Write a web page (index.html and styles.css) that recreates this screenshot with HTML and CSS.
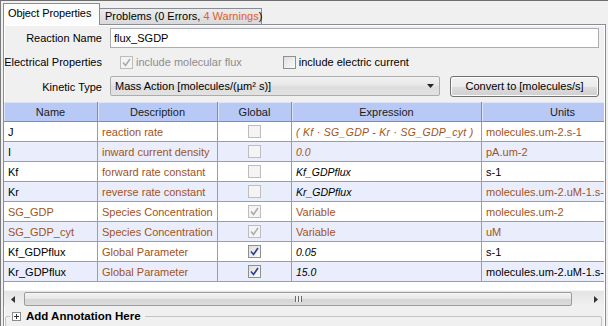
FILE: index.html
```html
<!DOCTYPE html>
<html lang="en">
<head>
  <meta charset="UTF-8" />
  <title>Object Properties</title>
  <link rel="stylesheet" href="styles.css">
</head>
<body>
  <div class="tabs">
    <div class="tab active">Object Properties</div>
    <div class="tab">Problems (0 Errors, <span class="warn">4 Warnings</span>)</div>
  </div>

  <div class="pane">
    <div class="form">
      <label>Reaction Name</label>
      <div class="field">flux_SGDP</div>

      <label>Electrical Properties</label>
      <div class="checks">
        <span class="opt disabled">
          <span class="cb off"><svg width="11" height="11" viewBox="0 0 11 11"><path d="M2 5.5 4.5 8.5 9 2" fill="none" stroke="#a9a9a9" stroke-width="1.5"/></svg></span>
          include molecular flux
        </span>
        <span class="opt">
          <span class="cb"></span>
          include electric current
        </span>
      </div>

      <label>Kinetic Type</label>
      <div class="kinetic">
        <div class="combo">
          <span>Mass Action [molecules/(µm² s)]</span>
          <svg width="7" height="4" viewBox="0 0 7 4"><path d="M0 0h7L3.5 4z" fill="#222"/></svg>
        </div>
        <div class="button">Convert to [molecules/s]</div>
      </div>
    </div>

    <div class="grid-wrap">
      <div class="viewport">
        <table class="params">
          <colgroup>
            <col class="c-name"><col class="c-desc"><col class="c-glob"><col class="c-expr"><col class="c-unit">
          </colgroup>
          <thead>
            <tr><th>Name</th><th>Description</th><th>Global</th><th>Expression</th><th>Units</th></tr>
          </thead>
          <tbody>
            <tr>
              <td>J</td><td class="br">reaction rate</td>
              <td class="ck"><span class="cb off"></span></td>
              <td class="expr br wide">( Kf · SG_GDP - Kr · SG_GDP_cyt )</td>
              <td class="br">molecules.um-2.s-1</td>
            </tr>
            <tr>
              <td>I</td><td class="br">inward current density</td>
              <td class="ck"><span class="cb off"></span></td>
              <td class="expr br">0.0</td>
              <td class="br">pA.um-2</td>
            </tr>
            <tr>
              <td>Kf</td><td class="br">forward rate constant</td>
              <td class="ck"><span class="cb off"></span></td>
              <td class="expr">Kf_GDPflux</td>
              <td>s-1</td>
            </tr>
            <tr>
              <td>Kr</td><td class="br">reverse rate constant</td>
              <td class="ck"><span class="cb off"></span></td>
              <td class="expr">Kr_GDPflux</td>
              <td class="br">molecules.um-2.uM-1.s-1</td>
            </tr>
            <tr>
              <td class="br">SG_GDP</td><td class="br">Species Concentration</td>
              <td class="ck"><span class="cb off"><svg width="11" height="11" viewBox="0 0 11 11"><path d="M2 5.5 4.5 8.5 9 2" fill="none" stroke="#a9a9a9" stroke-width="1.5"/></svg></span></td>
              <td class="br">Variable</td>
              <td class="br">molecules.um-2</td>
            </tr>
            <tr>
              <td class="br">SG_GDP_cyt</td><td class="br">Species Concentration</td>
              <td class="ck"><span class="cb off"><svg width="11" height="11" viewBox="0 0 11 11"><path d="M2 5.5 4.5 8.5 9 2" fill="none" stroke="#a9a9a9" stroke-width="1.5"/></svg></span></td>
              <td class="br">Variable</td>
              <td class="br">uM</td>
            </tr>
            <tr>
              <td>Kf_GDPflux</td><td class="br">Global Parameter</td>
              <td class="ck"><span class="cb"><svg width="11" height="11" viewBox="0 0 11 11"><path d="M2 5.5 4.5 8.5 9 2" fill="none" stroke="#2a3f8f" stroke-width="1.6"/></svg></span></td>
              <td class="expr">0.05</td>
              <td>s-1</td>
            </tr>
            <tr>
              <td>Kr_GDPflux</td><td class="br">Global Parameter</td>
              <td class="ck"><span class="cb"><svg width="11" height="11" viewBox="0 0 11 11"><path d="M2 5.5 4.5 8.5 9 2" fill="none" stroke="#2a3f8f" stroke-width="1.6"/></svg></span></td>
              <td class="expr">15.0</td>
              <td>molecules.um-2.uM-1.s-1</td>
            </tr>
          </tbody>
        </table>
      </div>

      <div class="hscroll">
        <div class="arrow"><svg width="4" height="7" viewBox="0 0 4 7"><path d="M4 0v7L0 3.5z" fill="#333"/></svg></div>
        <div class="thumb"><span class="grip"></span></div>
        <div class="track"></div>
        <div class="arrow"><svg width="4" height="7" viewBox="0 0 4 7"><path d="M0 0v7l4-3.5z" fill="#333"/></svg></div>
      </div>
    </div>

    <fieldset class="annot">
      <legend>
        <svg width="9" height="9" viewBox="0 0 9 9"><rect x="0.5" y="0.5" width="8" height="8" fill="#fff" stroke="#8c8c8c"/><path d="M2 4.5h5M4.5 2v5" stroke="#333"/></svg>
        Add Annotation Here
      </legend>
    </fieldset>
  </div>
</body>
</html>
```

FILE: styles.css
```css
/* Base */
* { box-sizing: border-box; }
body {
  margin: 0;
  width: 608px; height: 326px;
  overflow: hidden;
  background: #f0f0f0;
  font: 11px "Liberation Sans", Arial, sans-serif;
  color: #000;
  border-top: 1px solid #6e6e6e;
  border-left: 1px solid #7a7a7a;
}

/* Tabs */
.tabs {
  display: flex;
  align-items: flex-end;
  height: 23px;
  padding-left: 2px;
}
.tab {
  height: 16px;
  padding: 0 5px;
  line-height: 15px;
  border: 1px solid #898c95;
  border-bottom: none;
  background: linear-gradient(#ececec, #d9d9d9);
  white-space: nowrap;
}
.tab.active {
  position: relative;
  z-index: 1;
  width: 97px;
  height: 22px;
  margin-bottom: -1px;
  padding: 0 4px;
  line-height: 19px;
  letter-spacing: -0.1px;
  background: #fcfcfc;
}
.tab + .tab { width: 162px; border-left: none; }
.warn { color: #e0602a; }

/* Pane */
.pane {
  margin-left: 2px;
  width: 603px;
  height: 310px;
  border: 1px solid #898c95;
  box-shadow: inset 0 0 0 1px #fff;
  background: #f0f0f0;
}

/* Form */
.form {
  display: grid;
  grid-template-columns: 98px 1fr;
  grid-template-rows: 20px 24px 21px;
  column-gap: 8px;
  row-gap: 2px;
  padding: 3px 6px 0 0;
}
.form label {
  align-self: center;
  text-align: right;
  white-space: nowrap;
}
.field {
  border: 1px solid #abadb3;
  background: #fff;
  padding-left: 3px;
  line-height: 18px;
}
.checks {
  display: flex;
  align-items: center;
  padding-left: 10px;
}
.opt { display: flex; align-items: center; gap: 3px; }
.opt + .opt { margin-left: 41px; }
.opt.disabled { color: #8d8d8d; }

.cb {
  display: inline-flex;
  align-items: center;
  justify-content: center;
  width: 13px; height: 13px;
  border: 1px solid #8e8f8f;
  background: linear-gradient(135deg, #dedede, #fbfbfb);
  vertical-align: middle;
}
.cb.off {
  border-color: #bdbdbd;
  background: #f4f4f4;
}

.kinetic { display: flex; gap: 10px; }
.combo {
  display: flex;
  align-items: center;
  justify-content: space-between;
  width: 330px; height: 20px;
  padding: 0 5px 0 4px;
  border: 1px solid #acacac;
  border-radius: 2px;
  background: linear-gradient(#f3f3f3, #e5e5e5 50%, #dddddd 51%, #e2e2e2);
}
.button {
  width: 149px; height: 21px;
  border: 1px solid #707070;
  border-radius: 3px;
  background: linear-gradient(#f2f2f2, #ebebeb 50%, #dddddd 51%, #cfcfcf);
  text-align: center;
  line-height: 19px;
  box-shadow: inset 0 0 0 1px #fcfcfc;
}

/* Parameter table */
.grid-wrap {
  margin: 5px 1px 0 0;
}
.viewport {
  height: 188px;
  overflow: hidden;
  background: #fff;
}
.params {
  width: 640px;
  table-layout: fixed;
  border-collapse: separate;
  border-spacing: 0;
}
.c-name { width: 94px; }
.c-desc { width: 120px; }
.c-glob { width: 74px; }
.c-expr { width: 190px; }
.c-unit { width: 162px; }

.params th {
  height: 20px;
  padding: 0;
  font-weight: normal;
  color: #1b1b1b;
  background: #b9c9f5;
  border-right: 1px solid #8d8d8d;
  border-bottom: 1px solid #8d8d8d;
  box-shadow: inset 1px 1px 0 #dbe4fb;
}
.params td {
  height: 20px;
  padding: 0 4px;
  white-space: nowrap;
  overflow: hidden;
  border-right: 1px solid #9e9e9e;
  border-bottom: 1px solid #9e9e9e;
}
.params tbody tr:nth-child(even) td { background: #eaeefc; }
.params td.br { color: #a0531c; }
.params td.expr { font-style: italic; font-size: 10.5px; }
.params td.wide { letter-spacing: 0.3px; padding-left: 4px; }
.params td.ck { text-align: center; padding: 0; }

/* Horizontal scrollbar */
.hscroll {
  display: flex;
  height: 17px;
  background: linear-gradient(#e4e4e4, #f1f1f1);
  border-top: 1px solid #f6f6f6;
}
.arrow {
  display: flex;
  align-items: center;
  justify-content: center;
  width: 17px;
}
.thumb {
  display: flex;
  align-items: center;
  justify-content: center;
  width: 548px;
  margin: 1px 0 1px 3px;
  border: 1px solid #9c9c9c;
  border-radius: 2px;
  background: linear-gradient(#f4f4f4, #e6e6e6 50%, #d5d5d5 51%, #dcdcdc);
}
.grip {
  width: 7px; height: 6px;
  background: repeating-linear-gradient(90deg, #6a6a6a 0 1px, #eee 1px 3px);
}
.track { flex: 1; }

/* Annotation group */
.annot {
  height: 17px;
  margin: 3px 3px 0 1px;
  padding: 0;
  border: 1px solid #c4c4c4;
  border-radius: 2px;
}
.annot legend {
  display: flex;
  align-items: center;
  gap: 5px;
  margin-left: 4px;
  padding: 0 4px 0 2px;
  font-weight: bold;
  font-size: 11.5px;
  line-height: 13px;
}
```
